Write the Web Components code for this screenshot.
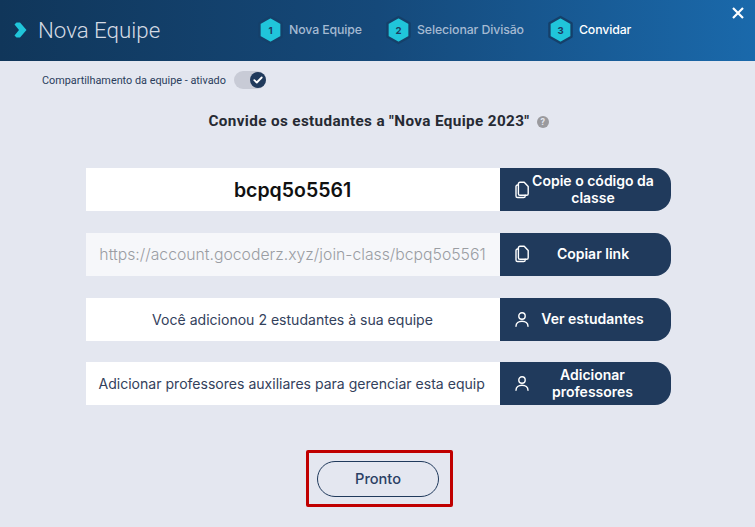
<!DOCTYPE html>
<html lang="pt">
<head>
<meta charset="utf-8">
<title>Nova Equipe</title>
<style>
  html, body { margin: 0; height: 100%; }
  body { background: #e4e7f0; font-family: Roboto, sans-serif; overflow: hidden; }
</style>
</head>
<body>
<team-dialog>
  <step-item slot="steps" num="1" state="done">Nova Equipe</step-item>
  <step-item slot="steps" num="2" state="done">Selecionar Divisão</step-item>
  <step-item slot="steps" num="3" state="active">Convidar</step-item>
  <invite-row value="bcpq5o5561" kind="code" icon="copy" label="Copie o código da classe"></invite-row>
  <invite-row value="https://account.gocoderz.xyz/join-class/bcpq5o5561" kind="link" icon="copy" label="Copiar link"></invite-row>
  <invite-row value="Você adicionou 2 estudantes à sua equipe" icon="user" label="Ver estudantes"></invite-row>
  <invite-row value="Adicionar professores auxiliares para gerenciar esta equip" kind="clip" icon="user" label="Adicionar professores"></invite-row>
</team-dialog>
<script>
const ICONS = {
  copy: `<svg width="15" height="18" viewBox="0 0 15 18" fill="none" stroke="#fff" stroke-width="1.4" stroke-linejoin="round" stroke-linecap="round"><path d="M5 1.2h4.2l4 4.3v7.2a1.6 1.6 0 0 1-1.6 1.6H5a1.6 1.6 0 0 1-1.6-1.6V2.8A1.6 1.6 0 0 1 5 1.2z"/><path d="M3.4 4H2.6A1.6 1.6 0 0 0 1 5.6v9.3a1.6 1.6 0 0 0 1.6 1.6h6a1.6 1.6 0 0 0 1.6-1.6v-.6"/></svg>`,
  user: `<svg width="14" height="15" viewBox="0 0 14 15" fill="none" stroke="#fff" stroke-width="1.4" stroke-linecap="round"><circle cx="7" cy="4" r="3.2"/><path d="M1 14.2c0-3 2.500-5 6-5s6 2 6 5"/></svg>`
};

// Hexagon step marker with its caption
class StepItem extends HTMLElement {
  constructor() {
    super();
    this.attachShadow({ mode: 'open' });
    this.shadowRoot.innerHTML = `
      <style>
        :host { display: flex; align-items: center; gap: 6px; font: 500 12.3px Inter, Roboto, sans-serif; color: #a5bad2; letter-spacing: -.1px; }
        :host([state="active"]) { color: #fff; }
        svg { display: block; }
        text { font: 700 10px Inter, sans-serif; fill: #1d3b5f; }
      </style>
      <svg width="25" height="30" viewBox="0 0 26 30">
        <path d="M13 1.5 24.5 8v14L13 28.5 1.5 22V8z" fill="#20c5da" stroke="#15406a" stroke-width="2.5" stroke-linejoin="round"/>
        <text x="13" y="18.8" text-anchor="middle">${this.getAttribute('num')}</text>
      </svg>
      <span><slot></slot></span>`;
  }
}

class ShareToggle extends HTMLElement {
  constructor() {
    super();
    this.attachShadow({ mode: 'open' });
    this.shadowRoot.innerHTML = `
      <style>
        :host { display: flex; align-items: center; gap: 8px; font: 400 10.85px Roboto, sans-serif; color: #2a3d5c; }
        .track { width: 32px; height: 18px; border-radius: 9px; background: #c8cbd6; display: flex; justify-content: flex-end; align-items: center; }
        .knob { width: 16px; height: 16px; border-radius: 50%; background: #203a5c; display: flex; align-items: center; justify-content: center; }
      </style>
      <span><slot></slot></span>
      <div class="track"><div class="knob">
        <svg width="10" height="8" viewBox="0 0 10 8" fill="none" stroke="#fff" stroke-width="1.8" stroke-linecap="round" stroke-linejoin="round"><path d="M1.3 4.2 3.8 6.5 8.7 1.5"/></svg>
      </div></div>`;
  }
}

// One line of the invite list: white field on the left, dark action on the right
class InviteRow extends HTMLElement {
  constructor() {
    super();
    this.attachShadow({ mode: 'open' });
    this.shadowRoot.innerHTML = `
      <style>
        :host { display: flex; height: 43px; width: 585px; }
        .field { width: 414px; box-sizing: border-box; background: #fff; display: flex; align-items: center; justify-content: center; padding: 0 13px; font: 400 14.05px Inter, sans-serif; color: #33415c; white-space: nowrap; }
        :host([kind="code"]) .field { font-size: 19.5px; font-weight: 600; color: #111; }
        :host([kind="link"]) .field { background: #f6f7fa; color: #9a9da3; font-size: 15.75px; font-weight: 300; }
        :host([kind="clip"]) .field { justify-content: flex-start; }
        button { all: unset; box-sizing: border-box; flex: 1; background: #203a5c; color: #fff; border-radius: 0 16px 16px 0; display: flex; align-items: center; padding: 0 16px 0 15px; gap: 2px; font: 600 14px/17px Inter, sans-serif; }
        button svg { flex: none; display: block; }
        .lbl { flex: 1; text-align: center; padding-bottom: 2px; }
      </style>
      <div class="field"><span>${this.getAttribute('value')}</span></div>
      <button>${ICONS[this.getAttribute('icon')]}<span class="lbl">${this.getAttribute('label')}</span></button>`;
  }
}

class TeamDialog extends HTMLElement {
  constructor() {
    super();
    this.attachShadow({ mode: 'open' });
    this.shadowRoot.innerHTML = `
      <style>
        :host { display: block; width: 755px; height: 527px; background: #e4e7f0; position: relative; }
        header { height: 61px; box-sizing: border-box; background: linear-gradient(90deg, #10365a 0%, #15497a 50%, #1a69ab 100%); display: flex; align-items: center; padding: 0 0 2px 14px; }
        .title { display: flex; align-items: center; gap: 11px; width: 244px; font: 300 22.3px Roboto, sans-serif; color: #d5dbe4; }
        .steps { display: flex; align-items: center; gap: 24px; }
        .close { position: absolute; right: 11px; top: 7px; }
        main { display: flex; flex-direction: column; align-items: center; }
        share-toggle { align-self: flex-start; margin: 10px 0 0 42px; }
        h2 { margin: 24px 0 0 2px; font: 700 15.25px/17px Roboto, sans-serif; color: #262a33; letter-spacing: .37px; display: flex; align-items: center; gap: 7px; }
        .rows { display: flex; flex-direction: column; gap: 21.6px; margin: 38.4px 0 0 1px; }
        .frame { margin: 45px 0 0 4px; border: 3px solid #c00000; border-radius: 2px; padding: 8px 11px 7px 8px; display: flex; }
        .done { all: unset; box-sizing: border-box; width: 122px; height: 36px; border: 1px solid #203a5c; border-radius: 18px; text-align: center; font: 500 14.6px/34px Inter, sans-serif; color: #2a4064; }
      </style>
      <header>
        <div class="title">
          <svg width="13" height="16" viewBox="0 0 13 16"><path d="M.5 2.5 2.5 .5H6L12.5 8 6 15.5H2.5L.5 13.5 5 8z" fill="#20c5da"/></svg>
          <span>Nova Equipe</span>
        </div>
        <div class="steps"><slot name="steps"></slot></div>
      </header>
      <svg class="close" width="12" height="12" viewBox="0 0 12 12" stroke="#fff" stroke-width="2.2"><path d="M1 1l10 10M11 1 1 11"/></svg>
      <main>
        <share-toggle>Compartilhamento da equipe - ativado</share-toggle>
        <h2>Convide os estudantes a "Nova Equipe 2023"
          <svg width="12" height="12" viewBox="0 0 12 12"><circle cx="6" cy="6" r="6" fill="#9a9a9e"/><text x="6" y="9.2" text-anchor="middle" font-family="Roboto" font-weight="700" font-size="9" fill="#e4e7f0">?</text></svg>
        </h2>
        <div class="rows"><slot></slot></div>
        <div class="frame"><button class="done">Pronto</button></div>
      </main>`;
  }
}

customElements.define('step-item', StepItem);
customElements.define('share-toggle', ShareToggle);
customElements.define('invite-row', InviteRow);
customElements.define('team-dialog', TeamDialog);
</script>
</body>
</html>
